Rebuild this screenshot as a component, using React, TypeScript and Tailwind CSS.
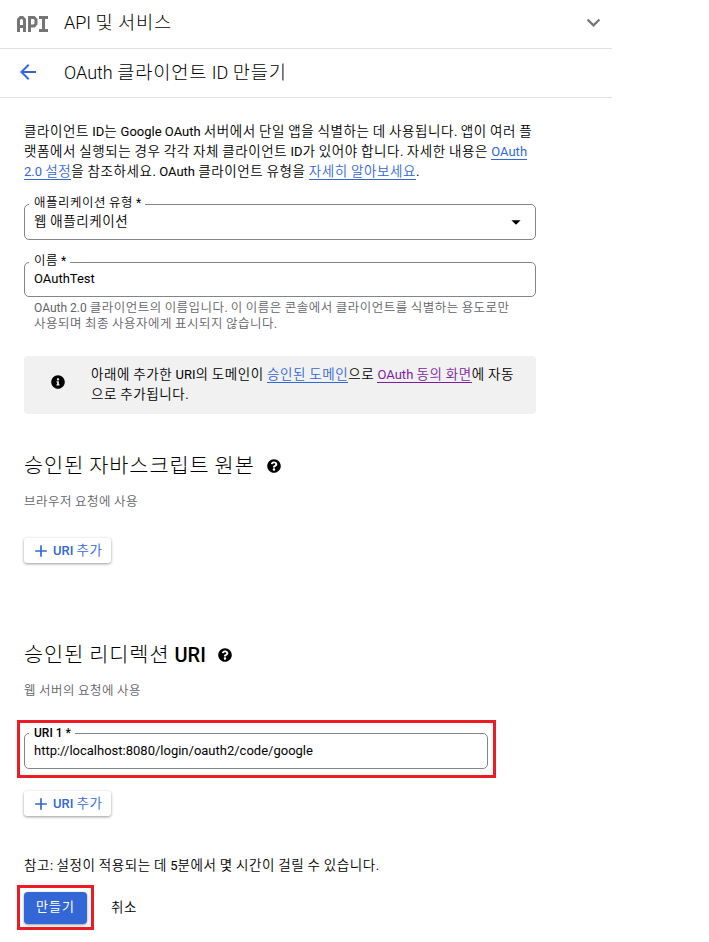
import type { ReactNode } from "react";
import clsx from "clsx";
import { FaInfoCircle, FaQuestionCircle } from "react-icons/fa";
import { MdAdd, MdArrowBack, MdArrowDropDown, MdExpandMore } from "react-icons/md";

function ApiLogo() {
    return (
        <svg width="32" height="16" viewBox="0 0 32 16" fill="none" stroke="#757575" strokeWidth="3">
            <path d="M1.500 16V3.500l2-2h2l2 2V16M1.500 10.500h6" />
            <path d="M12.500 16V1.500h4.500l2 2v4.500l-2 2h-4.500" />
            <path d="M22 1.500h9M26.500 1.500v13M22 14.500h9" />
        </svg>
    );
}

// Hangul runs are set wider than the latin text around them
function Ko({ text, light }: { text: string; light?: boolean }) {
    return (
        <>
            {text.split(/([가-힣]+)/).map((part, i) =>
                i % 2 ? (
                    <span key={i} className={clsx("text-[1.04em] leading-none", light ? "font-light tracking-[0.045em]" : "font-[350] tracking-[0.042em]")}>
                        {part}
                    </span>
                ) : (
                    part
                )
            )}
        </>
    );
}

function Line({ children, className }: { children: ReactNode; className?: string }) {
    return <span className={clsx("block w-max whitespace-nowrap", className)}>{children}</span>;
}

function Link({ text, visited }: { text: string; visited?: boolean }) {
    return (
        <a
            className={clsx(
                "inline-block h-[17px] border-b leading-[17px]",
                visited ? "border-[#7b1fa2] text-[#7b1fa2]" : "border-[#3367d6] text-[#3367d6]"
            )}
        >
            <Ko text={text} />
        </a>
    );
}

function Field({ label, value, className, children }: { label: ReactNode; value: string; className?: string; children?: ReactNode }) {
    return (
        <div className={clsx("relative flex items-center justify-between rounded-[5px] border border-[#80868b] pl-[9px]", className)}>
            <span className="absolute -top-[10px] left-1 bg-white pl-[5px] pr-1 text-xs leading-4 whitespace-nowrap">{label}</span>
            <span className="-mt-px leading-5">
                <Ko text={value} />
            </span>
            {children}
        </div>
    );
}

function AddUriButton() {
    return (
        <button className="flex h-[25px] w-[87px] items-center rounded-[3px] bg-white pl-[7px] text-[13px] font-medium text-[#3367d6] shadow-[0_1px_3px_rgba(0,0,0,0.4)]">
            <MdAdd size={20} />
            <span className="ml-0.5 whitespace-nowrap">
                <Ko text="URI 추가" />
            </span>
        </button>
    );
}

export default function App() {
    return (
        <div className="h-[942px] w-[709px] overflow-hidden bg-white font-[Roboto,'Noto_Sans_CJK_KR',sans-serif] text-[13px] text-black">
            <div className="w-[612px]">
                <header className="flex h-[49px] items-center border-b border-[#e0e0e0] pr-[5px] pl-[17px]">
                    <ApiLogo />
                    <h1 className="ml-[15px] flex-1 text-lg font-[350]">
                        <Line className="-mt-0.5">
                            <Ko text="API 및 서비스" light />
                        </Line>
                    </h1>
                    <MdExpandMore size={27} className="-mt-1 text-[#757575]" />
                </header>
                <div className="flex h-[49px] items-center border-b border-[#e0e0e0] pl-4">
                    <MdArrowBack size={24} className="-mt-0.5 text-[#3367d6]" />
                    <h2 className="ml-6 text-lg font-[350]">
                        <Line>
                            <Ko text="OAuth 클라이언트 ID 만들기" light />
                        </Line>
                    </h2>
                </div>

                <main className="pt-6 pl-6">
                    <p className="leading-5">
                        <Line>
                            <Ko text="클라이언트 ID는 Google OAuth 서버에서 단일 앱을 식별하는 데 사용됩니다. 앱이 여러 플" />
                        </Line>
                        <Line>
                            <Ko text="랫폼에서 실행되는 경우 각각 자체 클라이언트 ID가 있어야 합니다. 자세한 내용은 " />
                            <Link text="OAuth" />
                        </Line>
                        <Line>
                            <Link text="2.0 설정" />
                            <Ko text="을 참조하세요. OAuth 클라이언트 유형을 " />
                            <Link text="자세히 알아보세요" />.
                        </Line>
                    </p>

                    <Field className="mt-[22px] h-9 w-[512px] pr-2" label={<Ko text="애플리케이션 유형 *" />} value="웹 애플리케이션">
                        <MdArrowDropDown size={22} />
                    </Field>

                    <Field className="mt-[22px] h-[35px] w-[512px]" label={<Ko text="이름 *" />} value="OAuthTest" />
                    <p className="mt-[3px] pl-[10px] text-xs leading-4 text-[#5f6368]">
                        <Line>
                            <Ko text="OAuth 2.0 클라이언트의 이름입니다. 이 이름은 콘솔에서 클라이언트를 식별하는 용도로만" />
                        </Line>
                        <Line>
                            <Ko text="사용되며 최종 사용자에게 표시되지 않습니다." />
                        </Line>
                    </p>

                    <div className="mt-6 flex h-[58px] w-[512px] items-center rounded bg-[#f1f1f1] pl-[27px]">
                        <FaInfoCircle size={14} className="-mt-1.5" />
                        <p className="ml-[26px] leading-5">
                            <Line>
                                <Ko text="아래에 추가한 URI의 도메인이 " />
                                <Link text="승인된 도메인" />
                                <Ko text="으로 " />
                                <Link text="OAuth 동의 화면" visited />
                                <Ko text="에 자동" />
                            </Line>
                            <Line>
                                <Ko text="으로 추가됩니다." />
                            </Line>
                        </p>
                    </div>

                    <section className="mt-[38px]">
                        <h3 className="flex h-7 items-center text-xl font-medium">
                            <Line>
                                <Ko text="승인된 자바스크립트 원본" light />
                            </Line>
                            <FaQuestionCircle size={14} className="ml-3" />
                        </h3>
                        <p className="mt-3 text-xs leading-5 text-[#5f6368]">
                            <Line>
                                <Ko text="브라우저 요청에 사용" />
                            </Line>
                        </p>
                        <div className="mt-[26px]">
                            <AddUriButton />
                        </div>
                    </section>

                    <section className="mt-[78px]">
                        <h3 className="flex h-7 items-center text-xl font-medium">
                            <Line>
                                <Ko text="승인된 리디렉션 URI" light />
                            </Line>
                            <FaQuestionCircle size={14} className="ml-3" />
                        </h3>
                        <p className="mt-3 text-xs leading-5 text-[#5f6368]">
                            <Line>
                                <Ko text="웹 서버의 요청에 사용" />
                            </Line>
                        </p>
                        <div className="relative mt-8 w-[464px]">
                            <Field
                                className="h-9"
                                label={<span className="relative top-px font-medium">URI 1 *</span>}
                                value="http://localhost:8080/login/oauth2/code/google"
                            />
                            <div className="absolute -top-[13px] -left-[7px] h-[58px] w-[479px] border-3 border-[#ed1c24]" />
                        </div>
                        <div className="mt-[22px]">
                            <AddUriButton />
                        </div>
                    </section>

                    <p className="mt-10 leading-5">
                        <Line>
                            <Ko text="참고: 설정이 적용되는 데 5분에서 몇 시간이 걸릴 수 있습니다." />
                        </Line>
                    </p>
                    <div className="mt-4 flex items-center">
                        <div className="relative">
                            <button className="h-8 w-[63px] rounded bg-[#3367d6] pb-0.5 text-[13px] tracking-[0.08em] text-white shadow-[0_1px_3px_rgba(0,0,0,0.4)]">
                                만들기
                            </button>
                            <div className="absolute -top-[7px] -left-[7px] h-[45px] w-[77px] border-3 border-[#ed1c24]" />
                        </div>
                        <button className="ml-6">
                            <Ko text="취소" />
                        </button>
                    </div>
                </main>
            </div>
        </div>
    );
}
